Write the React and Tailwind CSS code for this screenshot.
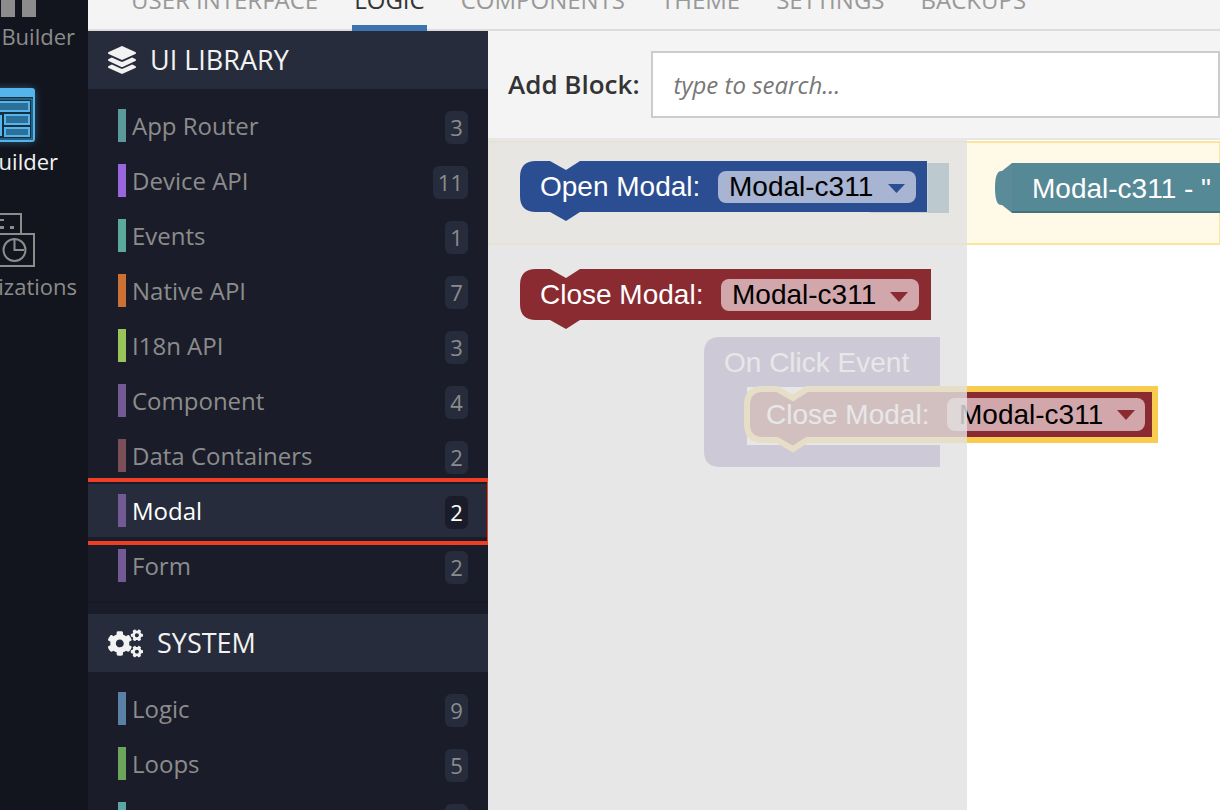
import { FaLayerGroup, FaCogs } from 'react-icons/fa'

const tabs = [
  { label: 'USER INTERFACE' },
  { label: 'LOGIC', active: true },
  { label: 'COMPONENTS' },
  { label: 'THEME' },
  { label: 'SETTINGS' },
  { label: 'BACKUPS' },
]

const libraryItems = [
  { label: 'App Router', count: 3, bar: 'bg-[#5b9a9a]' },
  { label: 'Device API', count: 11, bar: 'bg-[#9966dd]' },
  { label: 'Events', count: 1, bar: 'bg-[#5ba99c]' },
  { label: 'Native API', count: 7, bar: 'bg-[#cc7033]' },
  { label: 'I18n API', count: 3, bar: 'bg-[#99c45a]' },
  { label: 'Component', count: 4, bar: 'bg-[#745a95]' },
  { label: 'Data Containers', count: 2, bar: 'bg-[#7a4f58]' },
  { label: 'Modal', count: 2, bar: 'bg-[#745a95]', active: true },
  { label: 'Form', count: 2, bar: 'bg-[#745a95]' },
]

const systemItems = [
  { label: 'Logic', count: 9, bar: 'bg-[#5b80a5]' },
  { label: 'Loops', count: 5, bar: 'bg-[#6ba55b]' },
  { label: '', count: '', bar: 'bg-[#5ba5a5]' },
]

function RailLabel({ children, className }) {
  return (
    <div className={`flex justify-end h-[30px] leading-[30px] text-[22px] whitespace-nowrap ${className}`}>
      {children}
    </div>
  )
}

function Rail() {
  return (
    <aside className="w-[88px] shrink-0 h-full overflow-hidden flex flex-col bg-[#12151e]">
      <svg width="88" height="17" className="block shrink-0">
        <rect x="1" y="0" width="14" height="17" fill="#8c8c8c" />
        <rect x="22" y="0" width="14" height="17" fill="#8c8c8c" />
      </svg>
      <RailLabel className="mt-[4px] pr-[13px] text-[#8c8c8c]">Builder</RailLabel>

      <svg width="88" height="66" viewBox="0 82 88 66" className="block shrink-0 mt-[31px] -mb-[6px]">
        <defs>
          <filter id="glow" x="-40%" y="-40%" width="180%" height="180%">
            <feGaussianBlur stdDeviation="4" />
          </filter>
        </defs>
        <rect x="-12" y="89" width="46" height="52" rx="2" fill="#4aa9e0" opacity="0.55" filter="url(#glow)" />
        <rect x="-12" y="89" width="46" height="52" rx="2" fill="#12303f" stroke="#55b4ec" strokeWidth="2" />
        <rect x="-12" y="90" width="45" height="7" fill="#55b4ec" />
        <rect x="-10" y="99" width="42" height="40" fill="none" stroke="#3f8fc2" strokeWidth="1" />
        <rect x="-8" y="102" width="37" height="9" fill="#2c6f98" stroke="#55b4ec" strokeWidth="2" />
        <rect x="-8" y="115" width="10" height="21" fill="#55b4ec" />
        <rect x="5" y="115" width="24" height="9" fill="#2c6f98" stroke="#55b4ec" strokeWidth="2" />
        <rect x="5" y="128" width="24" height="8" fill="#2c6f98" stroke="#55b4ec" strokeWidth="2" />
      </svg>
      <RailLabel className="mt-[4px] pr-[30px] text-[#f2f2f2]">App Builder</RailLabel>

      <svg width="88" height="55" viewBox="0 213 88 55" className="block shrink-0 mt-[37px]">
        <path d="M-4 214H21V233" fill="none" stroke="#8c8c8c" strokeWidth="2" />
        <rect x="-2" y="219" width="6" height="2" fill="#8c8c8c" />
        <rect x="0" y="226" width="4" height="3" fill="#8c8c8c" />
        <rect x="10" y="226" width="4" height="3" fill="#8c8c8c" />
        <rect x="-6" y="234" width="40" height="32" fill="none" stroke="#8c8c8c" strokeWidth="2" />
        <circle cx="14.5" cy="250" r="11" fill="none" stroke="#8c8c8c" strokeWidth="2" />
        <path d="M14.5 240V250H24" fill="none" stroke="#8c8c8c" strokeWidth="2" />
      </svg>
      <RailLabel className="mt-[3px] pr-[11px] text-[#8c8c8c]">Visualizations</RailLabel>
    </aside>
  )
}

function TopTabs() {
  return (
    <div className="h-[31px] shrink-0 bg-[#f4f4f4] border-b-2 border-[#dcdcdc]">
      <nav className="flex h-[31px] pl-[41px] gap-[32px]">
        {tabs.map(tab => (
          <div
            key={tab.label}
            className={`h-[31px] px-[2px] whitespace-nowrap text-[24px] leading-[30px] ${
              tab.active ? 'text-[#333333] border-b-[6px] border-[#3d74b0]' : 'text-[#999999]'
            }`}
          >
            <span className="block -mt-[15px]">{tab.label}</span>
          </div>
        ))}
      </nav>
    </div>
  )
}

function CategoryRow({ item }) {
  return (
    <div className="relative h-[55px] py-px">
      <div className={`h-[53px] flex items-center pl-[30px] pr-[20px] ${item.active ? 'bg-[#262c3b]' : ''}`}>
        <span className={`w-[8px] h-[33px] shrink-0 ${item.bar}`} />
        <span className={`ml-[6px] flex-1 text-[24px] leading-[33px] ${item.active ? 'text-white' : 'text-[#8c8c8c]'}`}>
          {item.label}
        </span>
        <span
          className={`mt-[4px] h-[33px] min-w-[23px] px-[5px] rounded-[6px] text-center text-[22px] leading-[33px] ${
            item.active ? 'bg-[#1a1d29] text-white' : 'bg-[#262c3b] text-[#8c8c8c]'
          }`}
        >
          {item.count}
        </span>
      </div>
      {item.active && <div className="absolute -left-[4px] -right-[3px] -top-[5px] -bottom-[7px] border-4 border-[#ef3e25]" />}
    </div>
  )
}

function Sidebar() {
  return (
    <aside className="relative w-[400px] shrink-0 h-full overflow-hidden bg-[#1a1d29]">
      <div className="h-[58px] flex items-center pl-[20px] bg-[#262c3b] text-[#f2f2f2]">
        <FaLayerGroup className="w-[28px] h-[28px]" />
        <span className="ml-[14px] text-[27px]">UI LIBRARY</span>
      </div>
      <div className="py-[9px] border-b border-[#161923]">
        {libraryItems.map(item => <CategoryRow key={item.label} item={item} />)}
      </div>
      <div className="mt-[11px] h-[58px] flex items-center pl-[20px] bg-[#262c3b] text-[#f2f2f2]">
        <FaCogs className="w-[35px] h-[35px]" />
        <span className="ml-[14px] text-[27px]">SYSTEM</span>
      </div>
      <div className="py-[9px]">
        {systemItems.map(item => <CategoryRow key={item.bar} item={item} />)}
      </div>
    </aside>
  )
}

function BlockText({ x, y, className, children }) {
  return (
    <text x={x} y={y} className={`font-['Liberation_Sans',Arial,sans-serif] text-[28px] ${className}`}>
      {children}
    </text>
  )
}

// statement block with the notch on top and the bump below
function statementPath(x, y, w) {
  const h = 51
  return `M${x} ${y + 16}Q${x} ${y} ${x + 16} ${y}H${x + 30}L${x + 46} ${y + 9}L${x + 60} ${y}H${x + w}V${y + h}H${x + 60}L${x + 46} ${y + h + 9}L${x + 30} ${y + h}H${x + 16}Q${x} ${y + h} ${x} ${y + h - 16}Z`
}

function Workspace() {
  return (
    <svg width="732" height="670" viewBox="488 140 732 670" className="block">
      <rect x="488" y="140" width="732" height="670" fill="#ffffff" />
      <rect x="488" y="142" width="732" height="102" fill="#fff9e8" stroke="#fce49b" strokeWidth="2" />

      {/* teal block behind the flyout */}
      <rect x="870" y="163" width="79" height="50" fill="#5b8a99" />
      <path d="M1012 163V213L1002 205Q995 206 995 188Q995 170 1002 171L1012 163Z" fill="#5b8a99" />
      <rect x="1012" y="163" width="230" height="49" fill="#568996" />
      <rect x="1012" y="211" width="230" height="2" fill="#45727e" />
      <BlockText x="1032" y="198" className="fill-white">Modal-c311 - "</BlockText>

      {/* On Click Event, under the flyout */}
      <path d="M704 353Q704 337 720 337H940V387H747V445H940V467H720Q704 467 704 451Z" fill="#745ba5" />
      <BlockText x="724" y="372" className="fill-white">On Click Event</BlockText>

      {/* dragged block */}
      <path d={`${statementPath(747, 389, 408)}`} fill="#8a2a31" stroke="#f8cc50" strokeWidth="6" />
      <BlockText x="766" y="424" className="fill-white">Close Modal:</BlockText>
      <rect x="947" y="398" width="198" height="33" rx="8" fill="#d2a7ab" />
      <BlockText x="959" y="424" className="fill-black">Modal-c311</BlockText>
      <path d="M1117 410H1135L1126 420Z" fill="#8a2a31" />

      {/* flyout */}
      <rect x="488" y="140" width="479" height="670" fill="#e2e2e2" opacity="0.82" />

      <path d={statementPath(520, 161, 407)} fill="#2b4d92" />
      <rect x="928" y="163" width="21" height="50" fill="#bcc9cf" />
      <BlockText x="540" y="196" className="fill-white">Open Modal:</BlockText>
      <rect x="718" y="171" width="198" height="32" rx="8" fill="#a7b4d2" />
      <BlockText x="729" y="196" className="fill-black">Modal-c311</BlockText>
      <path d="M888 184H905L896.500 193Z" fill="#2b4d92" />

      <path d={statementPath(520, 269, 411)} fill="#8a2a31" />
      <BlockText x="540" y="304" className="fill-white">Close Modal:</BlockText>
      <rect x="721" y="279" width="198" height="32" rx="8" fill="#d2a7ab" />
      <BlockText x="732" y="304" className="fill-black">Modal-c311</BlockText>
      <path d="M890 292H908L899 302Z" fill="#8a2a31" />
    </svg>
  )
}

function Content() {
  return (
    <main className="flex-1 min-w-0 h-full overflow-hidden flex flex-col">
      <div className="h-[109px] shrink-0 flex items-center pl-[20px] bg-[#f4f4f4] border-b-2 border-[#e6e6e6]">
        <span className="text-[26px] font-semibold text-[#333333] whitespace-nowrap">Add Block:</span>
        <div className="ml-[11px] flex-1 h-[67px] flex items-center pl-[21px] bg-white border-2 border-[#cccccc]">
          <span className="text-[24px] italic text-[#777777]">type to search...</span>
        </div>
      </div>
      <Workspace />
    </main>
  )
}

export default function App() {
  return (
    <div className="w-[1220px] h-[810px] overflow-hidden flex font-['Open_Sans',sans-serif]">
      <Rail />
      <div className="flex-1 min-w-0 flex flex-col">
        <TopTabs />
        <div className="flex-1 min-h-0 flex">
          <Sidebar />
          <Content />
        </div>
      </div>
    </div>
  )
}
